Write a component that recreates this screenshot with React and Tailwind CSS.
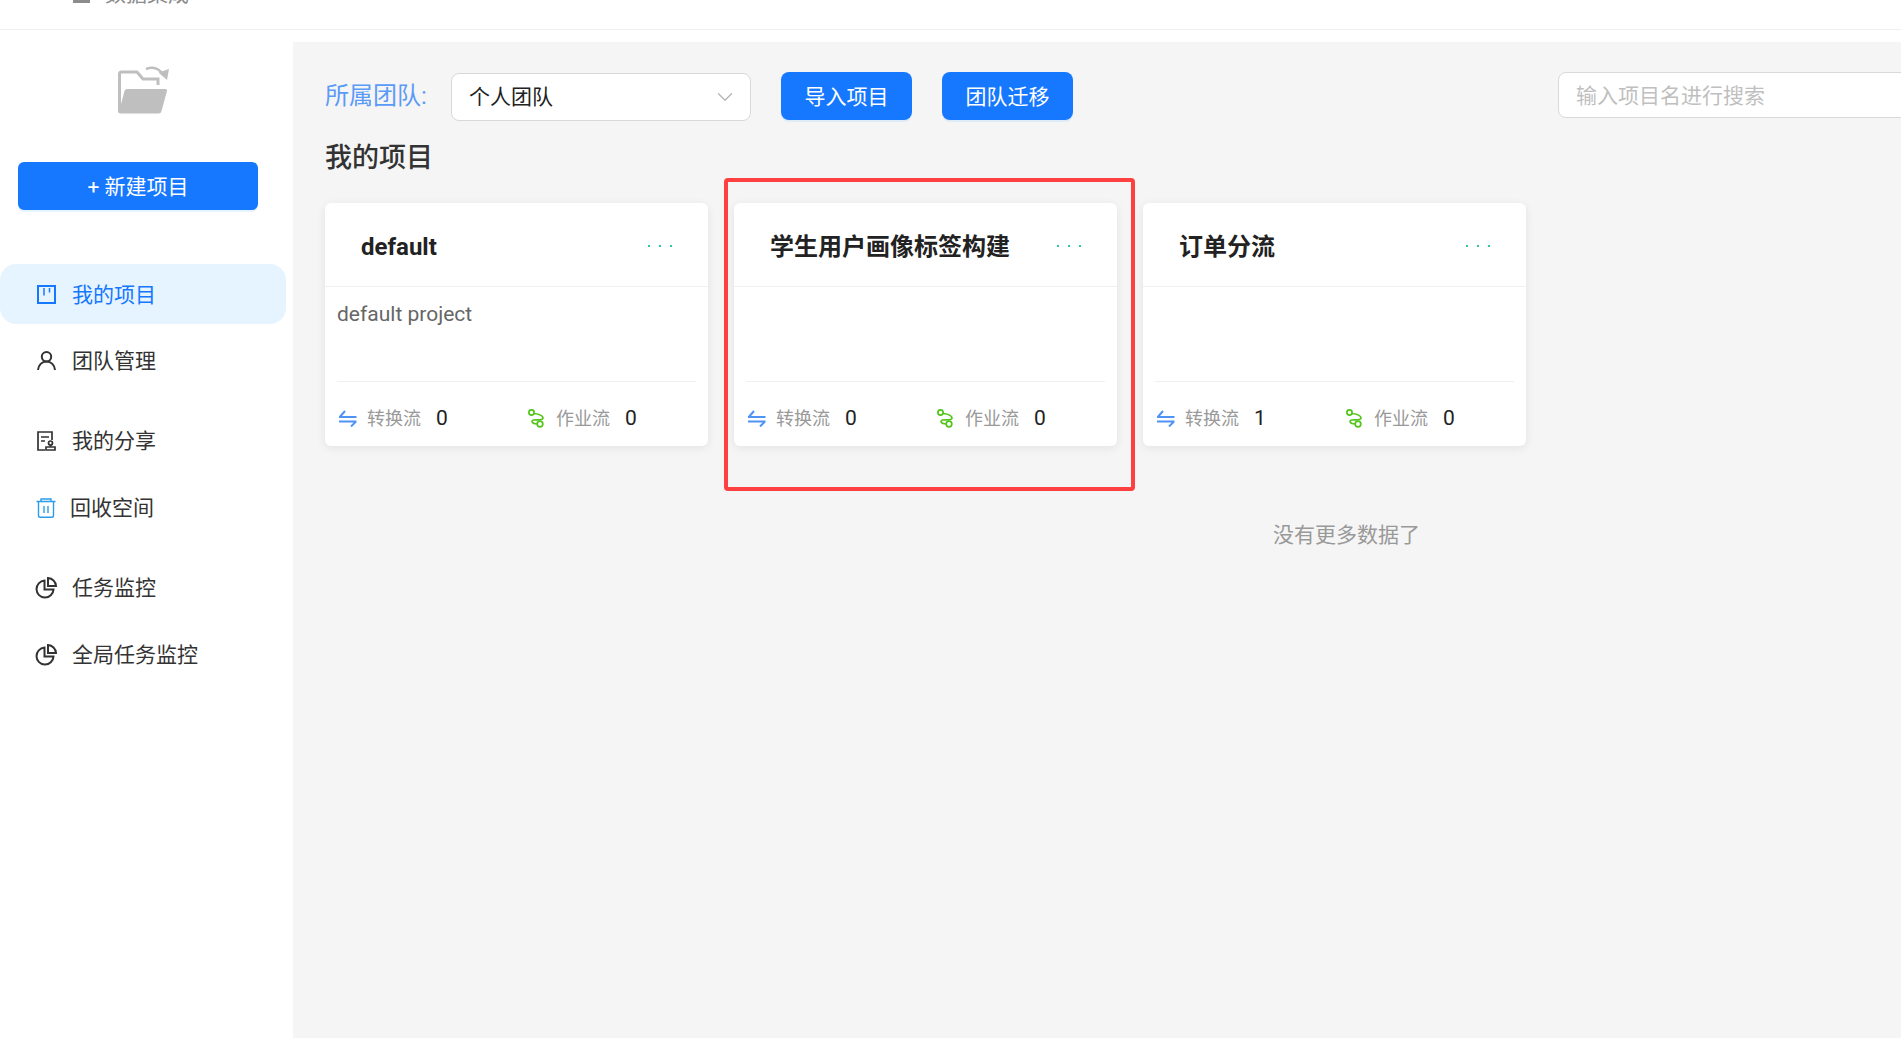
import React from 'react'
import { ChevronDown } from 'lucide-react'

const ProjectIcon = () => (
  <svg width="19" height="19" viewBox="0 0 19 19" fill="none" stroke="#1677ff" strokeWidth="2">
    <rect x="1" y="1" width="17" height="17" />
    <path d="M7 3v7.500M12.500 3v4.500" strokeWidth="1.500" />
  </svg>
)

const UserIcon = () => (
  <svg width="19" height="19" viewBox="0 1 19 19" className="overflow-visible" fill="none" stroke="#333" strokeWidth="2">
    <circle cx="9.500" cy="5.800" r="4.700" />
    <path d="M1 19c.4-5 3.800-8.500 8.500-8.500s8.100 3.500 8.500 8.500" />
  </svg>
)

const ShareIcon = () => (
  <svg width="19" height="20" viewBox="0 0 19 20" fill="none" stroke="#333" strokeWidth="1.700">
    <path d="M8 19H1V1h14v8" />
    <path d="M4 6h8M4 10h4" />
    <circle cx="13.500" cy="12" r="2" />
    <path d="M13.500 14v2M9 19v-3h9v3z" />
  </svg>
)

const TrashIcon = () => (
  <svg width="20" height="20" viewBox="0 0 20 20" fill="none" stroke="#2b9ce8" strokeWidth="1.400">
    <path d="M0.500 3.500h19M5 3.500V1h10v2.500" />
    <path d="M2.500 3.500v14a1.800 1.800 0 0 0 1.800 1.800h11.400a1.800 1.800 0 0 0 1.800-1.800v-14" />
    <path d="M8 8v7M12 8v7" />
  </svg>
)

const PieIcon = () => (
  <svg width="21" height="21" viewBox="0 1 21 21" className="overflow-visible" fill="none" stroke="#333" strokeWidth="2">
    <path d="M8.500 3.600a8.500 8.500 0 1 0 9 9h-9z" />
    <path d="M12 1c4.400.3 7.700 3.600 8 8h-8z" />
  </svg>
)

const FolderIcon = () => (
  <svg width="52" height="48" viewBox="0 0 52 48" fill="none">
    <path d="M40 19v-6H25l-6-7H3.500Q1.500 6 1.500 8v36" stroke="#bfbfbf" strokeWidth="3" />
    <path d="M9 23h38q2.500 0 2 2l-5.500 20q-.5 2.500-3 2.500H3q-3 0-3-2.500V40l2 2L6.500 25q.5-2 2.500-2z" fill="#bfbfbf" />
    <path d="M28 3c7-2.500 13-1 17 6" stroke="#bfbfbf" strokeWidth="2.500" />
    <path d="M40.500 6.500 51 3l-2 11z" fill="#bfbfbf" />
  </svg>
)

const SwapIcon = () => (
  <svg width="18" height="17" viewBox="0 0 18 17" fill="none" stroke="#4f94f5" strokeWidth="2">
    <path d="M0 7h17.500M0.800 7 6 1" />
    <path d="M0 11.500h17.500M17 11.500 12 16.500" />
  </svg>
)

const FlowIcon = () => (
  <svg width="17" height="19" viewBox="0 0 17 19" fill="none" stroke="#52c41a" strokeWidth="1.700">
    <circle cx="3.500" cy="3.500" r="2.600" />
    <circle cx="12" cy="15" r="2.800" />
    <path d="M6 4.500C10 5 15 6.500 15 9s-6 1.500-9.500 2C3 11.500 3.500 15 9 15" />
  </svg>
)

const navGroups = [
  [
    { label: '我的项目', icon: <ProjectIcon />, active: true },
    { label: '团队管理', icon: <UserIcon /> },
  ],
  [
    { label: '我的分享', icon: <ShareIcon /> },
    { label: '回收空间', icon: <TrashIcon />, tight: true },
  ],
  [
    { label: '任务监控', icon: <PieIcon /> },
    { label: '全局任务监控', icon: <PieIcon /> },
  ],
]

const projects = [
  { name: 'default', desc: 'default project', transforms: 0, jobs: 0 },
  { name: '学生用户画像标签构建', desc: '', transforms: 0, jobs: 0 },
  { name: '订单分流', desc: '', transforms: 1, jobs: 0 },
]

const Stat = ({ icon, label, value }) => (
  <div className="flex w-[189px] shrink-0 items-center">
    <span className="flex w-[28px] shrink-0 items-center">{icon}</span>
    <span className="text-[18px] text-[#999]">{label}</span>
    <span className="ml-[15px] pt-[1px] text-[21px] text-[#222]">{value}</span>
  </div>
)

const ProjectCard = ({ project }) => (
  <div className="h-[243px] w-[383px] rounded-md bg-white shadow-[0_2px_10px_rgba(0,0,0,0.08)]">
    <div className="flex h-[84px] items-center justify-between border-b border-[#f0f0f0] pl-[36px] pr-[36px] pt-[2px]">
      <span className="pt-[2px] text-[24px] font-bold text-[#222]">{project.name}</span>
      <div className="flex gap-[9px]">
        <span className="h-[2px] w-[2px] bg-[#36c5a5]" />
        <span className="h-[2px] w-[2px] bg-[#36c5a5]" />
        <span className="h-[2px] w-[2px] bg-[#36c5a5]" />
      </div>
    </div>
    <div className="mx-[12px] h-[95px] border-b border-[#f0f0f0] pt-[11px] text-[21px] leading-[32px] text-[#666]">
      {project.desc}
    </div>
    <div className="flex h-[64px] items-center overflow-hidden pl-[14px] pt-[8px]">
      <Stat icon={<SwapIcon />} label="转换流" value={project.transforms} />
      <Stat icon={<FlowIcon />} label="作业流" value={project.jobs} />
    </div>
  </div>
)

export default function App() {
  return (
    <div className="relative h-[1038px] w-[1901px] overflow-hidden bg-white font-['Roboto','Noto_Sans_CJK_SC',sans-serif]">
      {/* top bar, scrolled so only the bottom of the menu shows */}
      <div className="h-[30px] overflow-hidden border-b border-[#f0f0f0]">
        <div className="-mt-[20px] flex h-[30px] items-center gap-[15px] pl-[73px] text-[21px] text-[#8c8c8c]">
          <span className="mb-[2px] h-[18px] w-[17px] bg-[#8c8c8c]" />
          <span>数据集成</span>
        </div>
      </div>

      <div className="flex h-[1008px] pt-[12px]">
        <aside className="w-[293px] shrink-0 -mt-[12px] bg-white">
          <div className="flex justify-center pt-[36px] pr-[5px]">
            <FolderIcon />
          </div>
          <button className="ml-[18px] mt-[48px] h-[48px] w-[240px] rounded-md bg-[#1677ff] pt-[4px] text-[21px] text-white shadow-[0_2px_0_rgba(5,145,255,0.1)]">
            + 新建项目
          </button>
          <nav className="mt-[54px] flex flex-col gap-[20px] pr-[7px]">
            {navGroups.map((group, i) => (
              <div key={i} className="flex flex-col gap-[7px]">
                {group.map((item) => (
                  <div
                    key={item.label}
                    className={`flex h-[60px] items-center rounded-2xl pl-[36px] text-[21px] ${
                      item.tight ? 'gap-[14px]' : 'gap-[16px]'
                    } ${item.active ? 'bg-[#e6f4ff] pt-[1px] text-[#1677ff]' : 'text-[#333]'}`}
                  >
                    <span className="flex w-[20px] justify-center">{item.icon}</span>
                    <span className="pt-[2px]">{item.label}</span>
                  </div>
                ))}
              </div>
            ))}
          </nav>
        </aside>

        <main className="flex-1 bg-[#f5f5f5] pl-[32px] pt-[30px]">
          <div className="flex h-[49px] items-start">
            <span className="w-[126px] text-[24px] leading-[48px] text-[#5b9bf8]">所属团队:</span>
            <div className="mt-[1px] flex h-[48px] w-[300px] items-center justify-between rounded-lg border border-[#d9d9d9] bg-white pl-[17px] pr-[12px] text-[21px] text-[#222]">
              <span className="pt-[2px]">个人团队</span>
              <ChevronDown size={26} strokeWidth={1.200} className="text-[#b5b5b5]" />
            </div>
            <button className="ml-[30px] h-[48px] w-[131px] rounded-lg bg-[#1677ff] pt-[3px] text-[21px] text-white shadow-[0_2px_0_rgba(5,145,255,0.1)]">
              导入项目
            </button>
            <button className="ml-[30px] h-[48px] w-[131px] rounded-lg bg-[#1677ff] pt-[3px] text-[21px] text-white shadow-[0_2px_0_rgba(5,145,255,0.1)]">
              团队迁移
            </button>
            <div className="ml-[485px] flex h-[46px] w-[400px] shrink-0 items-center rounded-lg border border-[#d9d9d9] bg-white pl-[17px] pt-[4px] text-[21px] text-[#bfbfbf]">
              输入项目名进行搜索
            </div>
          </div>
          <h2 className="mt-[18px] text-[27px] font-medium leading-[38px] text-[#333]">我的项目</h2>
          <div className="mt-[26px] flex gap-[26px]">
            {projects.map((project) => (
              <ProjectCard key={project.name} project={project} />
            ))}
          </div>
          <p className="mt-[73px] pl-[948px] text-[21px] leading-[32px] text-[#999]">没有更多数据了</p>
        </main>
      </div>

      {/* red annotation box drawn over the screenshot */}
      <div className="absolute left-[724px] top-[178px] h-[313px] w-[411px] rounded-[4px] border-4 border-[#ff4040]" />
    </div>
  )
}
